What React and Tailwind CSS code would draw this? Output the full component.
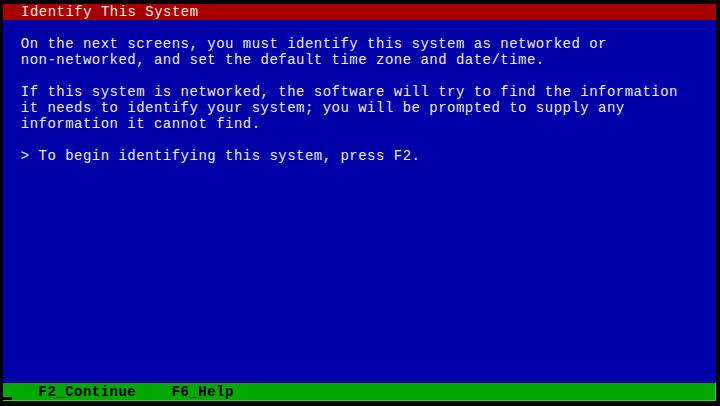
export default function App() {
  return (
    <div className="relative w-[720px] h-[406px] bg-black pt-[4px] pl-[3px] pr-[4px] font-['Liberation_Mono',monospace] text-[14px] leading-[16px] tracking-[0.48px] overflow-hidden">
      <div className="flex flex-col h-[397px]">
        {/* title bar */}
        <div className="h-[16px] bg-[#a80000] text-[#ecece0] pl-[18px] whitespace-pre">
          Identify This System
        </div>

        {/* body */}
        <div className="flex-1 bg-[#0000a8] text-[#ecece0] pt-[16px] pl-[17.76px] whitespace-pre">
          <p>On the next screens, you must identify this system as networked or</p>
          <p>non-networked, and set the default time zone and date/time.</p>
          <p>&nbsp;</p>
          <p>If this system is networked, the software will try to find the information</p>
          <p>it needs to identify your system; you will be prompted to supply any</p>
          <p>information it cannot find.</p>
          <p>&nbsp;</p>
          <p>&gt; To begin identifying this system, press F2.</p>
        </div>

        {/* function keys */}
        <div className="h-[18px] bg-[#00a800] border-b border-r border-[#3cd23c] text-black font-bold pl-[35.5px] pt-[1px] whitespace-pre">
          {"F2_Continue    F6_Help"}
        </div>
      </div>

      {/* cursor */}
      <div className="absolute left-[3px] top-[397px] w-[9px] h-[3px] bg-black"></div>
    </div>
  );
}
